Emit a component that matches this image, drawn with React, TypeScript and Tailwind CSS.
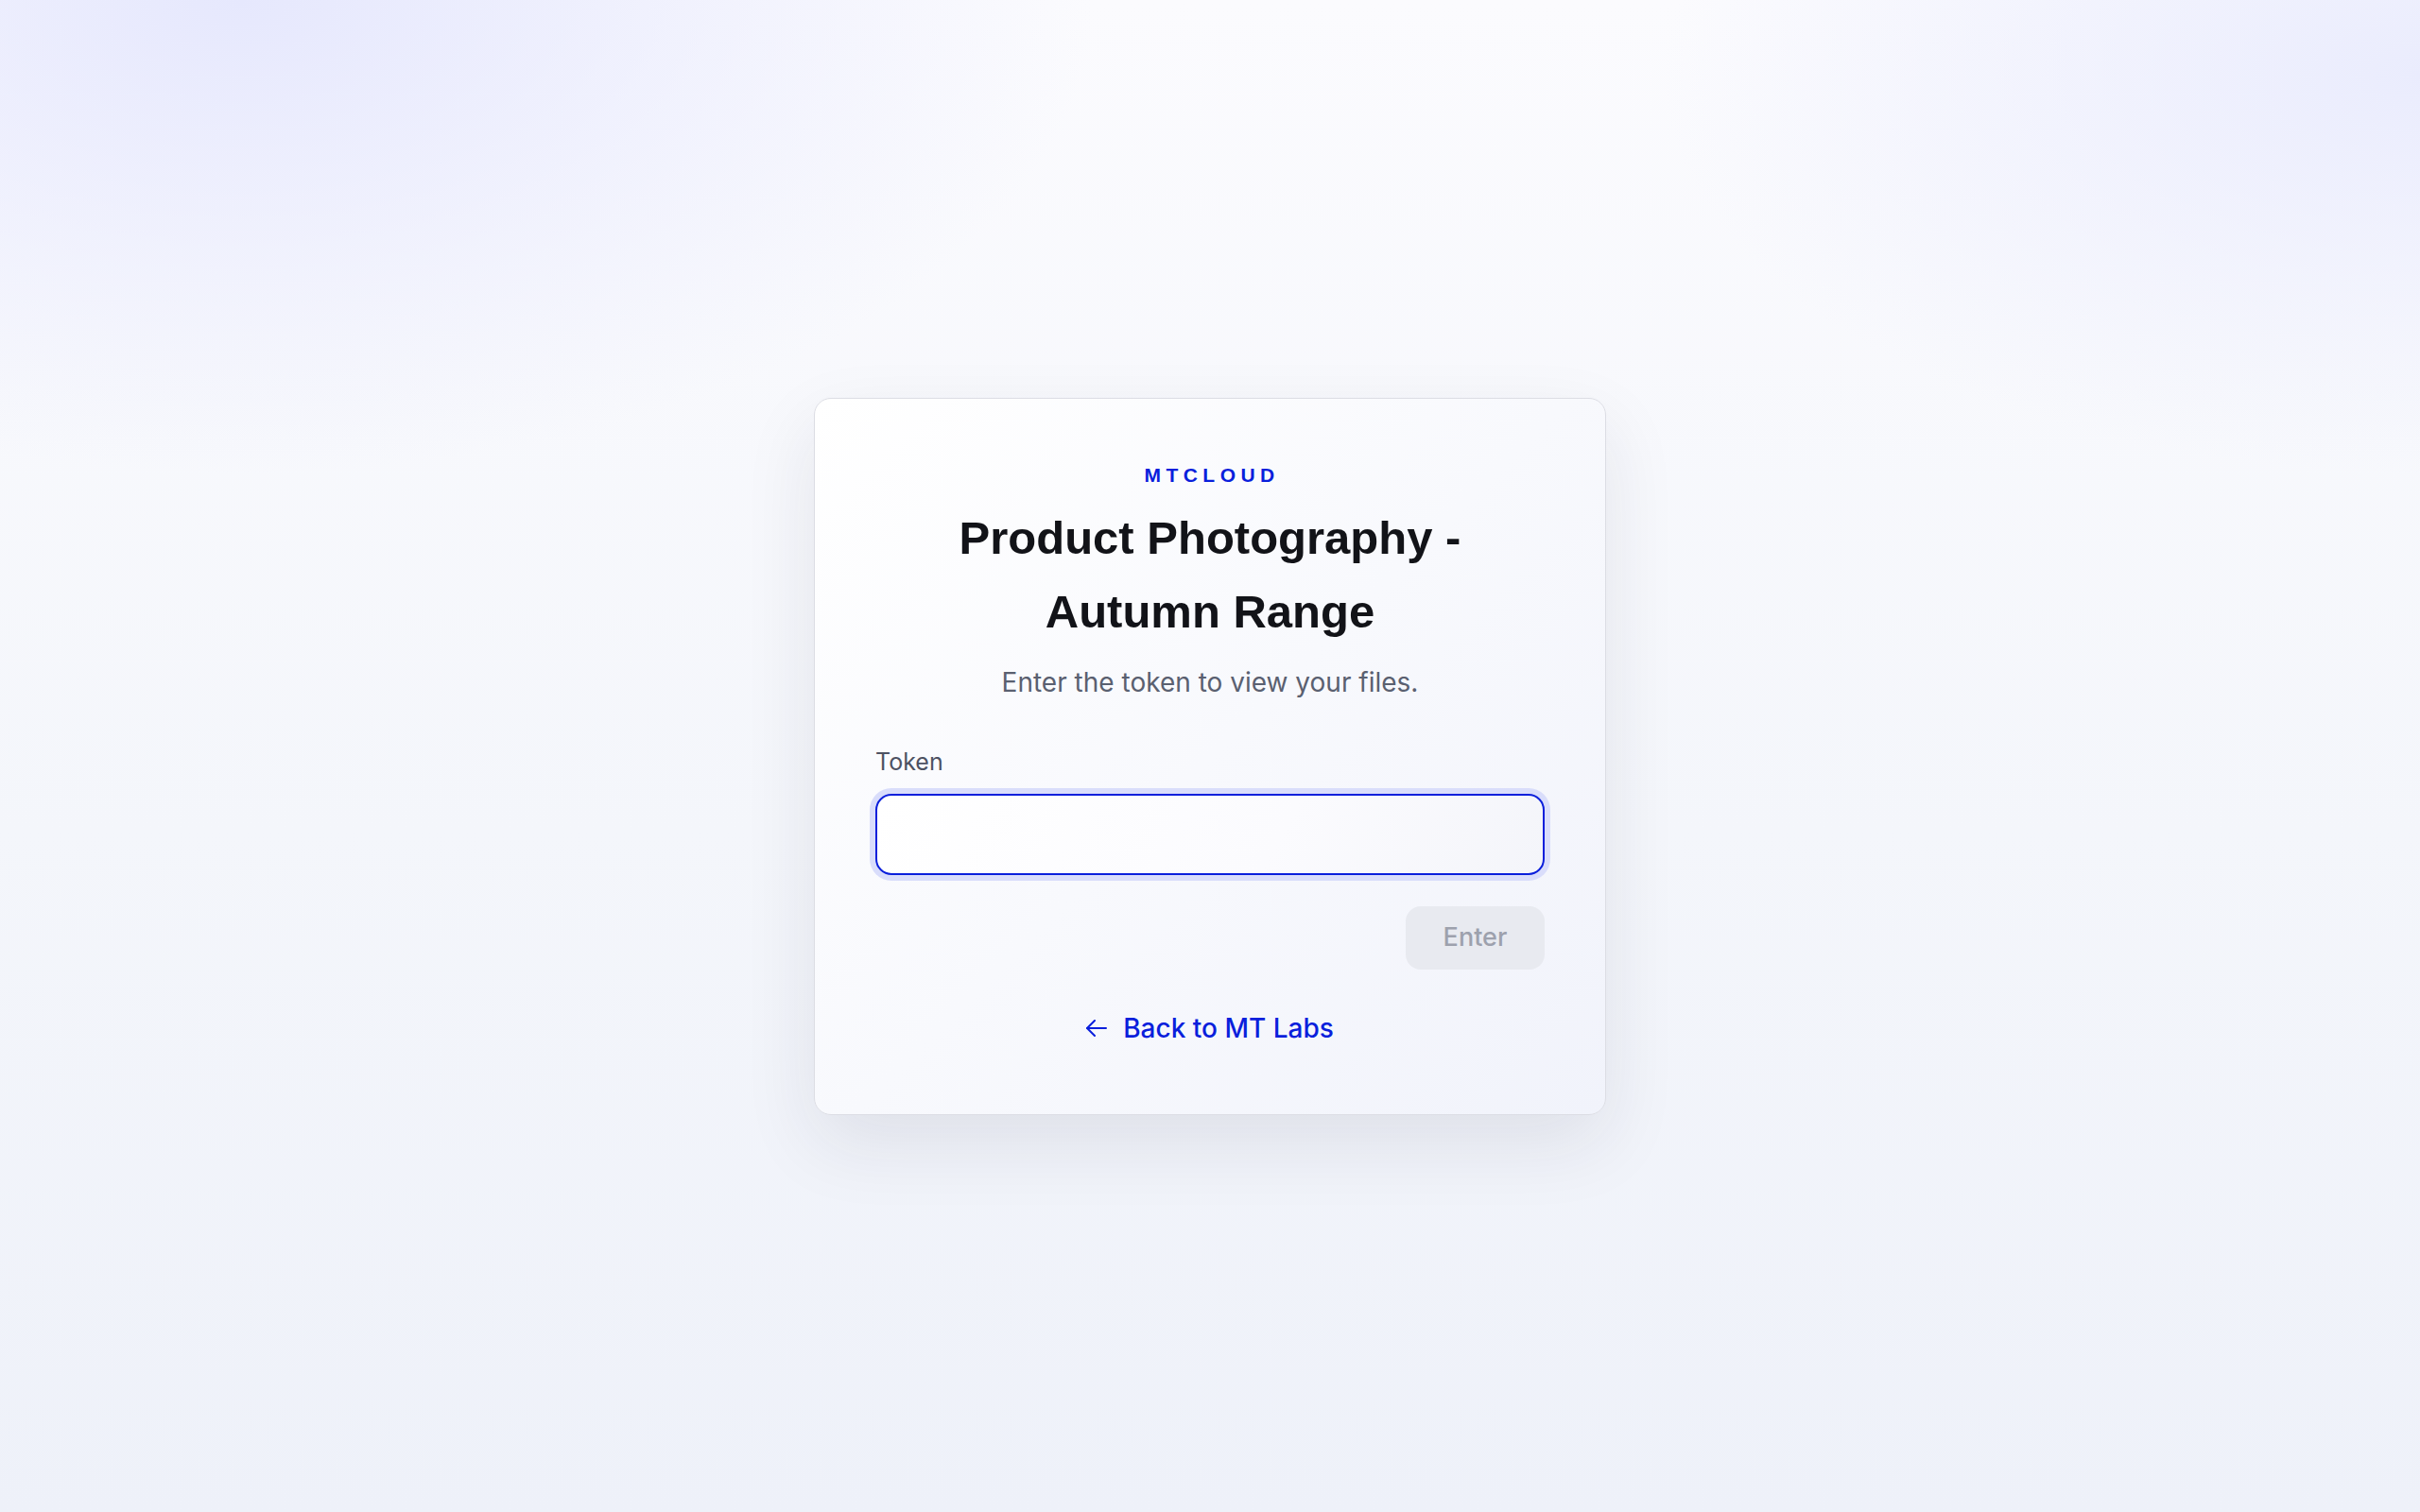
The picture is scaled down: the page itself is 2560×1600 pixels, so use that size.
export default function App() {
  return (
    <div className="min-h-screen w-full flex items-center justify-center bg-[radial-gradient(ellipse_900px_500px_at_10%_0%,#e6e8fd_0%,rgba(230,232,253,0)_100%),radial-gradient(ellipse_800px_420px_at_100%_5%,#eaecfd_0%,rgba(234,236,253,0)_100%),linear-gradient(to_bottom,#fbfbfe_0%,#f4f6fb_55%,#eef1f9_100%)] font-['Inter','Noto_Sans',sans-serif]">
      <div className="w-[838px] rounded-[18px] border border-[#dcdde4] bg-[linear-gradient(135deg,#ffffff_0%,#f8f9fd_50%,#f1f3fb_100%)] shadow-[0_30px_80px_rgba(30,35,60,0.09)] px-16 pt-[67px] pb-[71px]">
        <div className="flex flex-col items-center text-center">
          <p className="h-[28px] leading-[28px] text-[21px] font-bold tracking-[0.26em] pl-[0.2em] text-[#0a1fdc] font-['Liberation_Sans',Arial,sans-serif]">
            MTCLOUD
          </p>
          <h1 className="mt-[13px] max-w-[640px] text-[49px] leading-[78px] font-bold text-[#121318] font-['Liberation_Sans',Arial,sans-serif]">
            Product Photography - Autumn Range
          </h1>
          <p className="mt-[16px] text-[28px] leading-[40px] text-[#5a6070]">
            Enter the token to view your files.
          </p>
        </div>

        <label className="block mt-12 text-[25px] leading-[32px] text-[#4d5262]">Token</label>
        <input
          type="text"
          className="mt-[18px] block w-full h-[86px] rounded-[17px] border-2 border-[#0a1fdc] bg-[linear-gradient(120deg,#ffffff_0%,#fbfbfe_60%,#f4f5fa_100%)] shadow-[0_0_0_6px_#d9ddfb] outline-none px-6 text-[26px] text-[#121318]"
        />

        <div className="mt-[33px] flex justify-end">
          <button
            disabled
            className="w-[147px] h-[67px] rounded-[16px] bg-[#e8eaf0] text-[27px] font-medium text-[#9da1ad]"
          >
            Enter
          </button>
        </div>

        <div className="mt-[42px] flex justify-center">
          <a href="#" className="flex items-center gap-[17px] h-[40px] text-[28px] leading-[40px] font-medium text-[#0a1fdc]">
            <svg width="22" height="18" viewBox="0 0 22 18" fill="none" stroke="currentColor" strokeWidth="2" strokeLinecap="round" strokeLinejoin="round">
              <path d="M21 9H1" />
              <path d="M9 1 1 9l8 8" />
            </svg>
            Back to MT Labs
          </a>
        </div>
      </div>
    </div>
  )
}
